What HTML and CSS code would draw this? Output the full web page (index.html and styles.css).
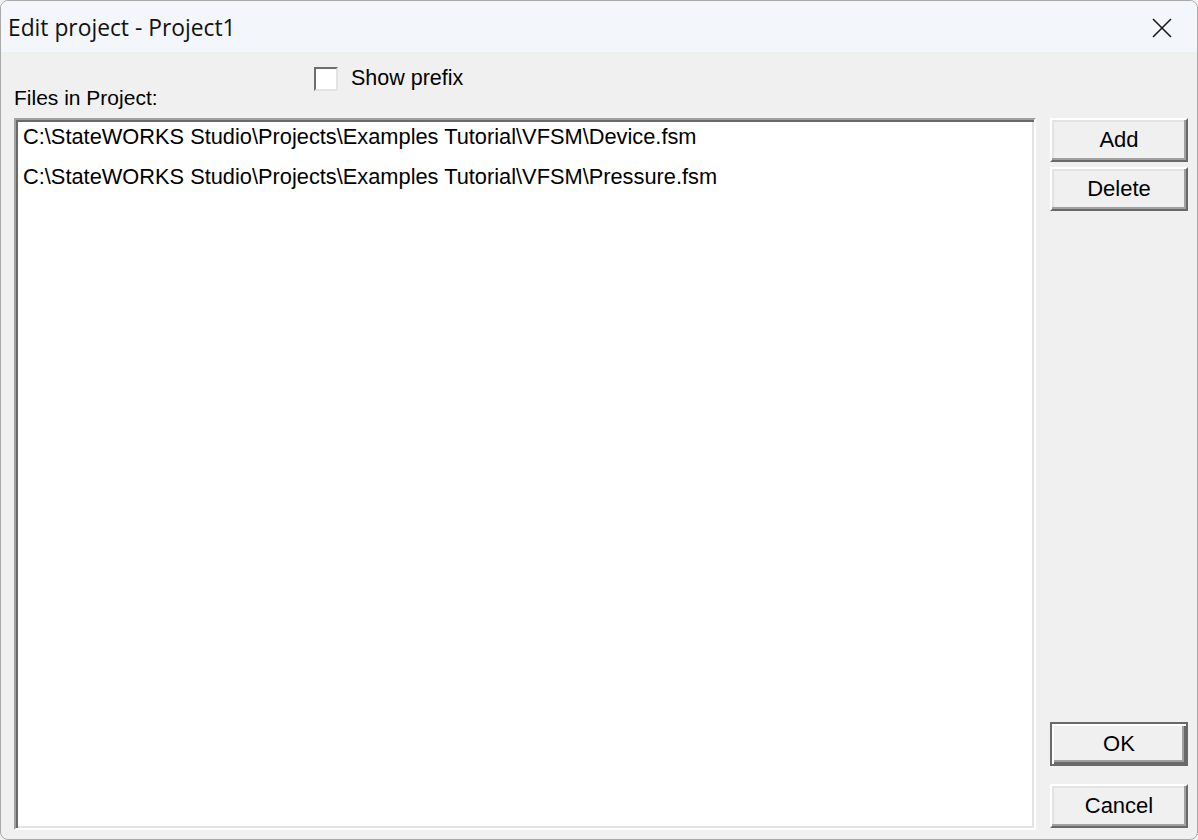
FILE: index.html
```html
<!DOCTYPE html>
<html>

<head>
  <title>Edit project - Project1</title>
  <link rel="stylesheet" href="styles.css">
</head>

<body>
  <div class="window">
    <div class="title-bar">
      <span class="title-text">Edit project - Project1</span>
      <span class="close-btn">
        <svg width="22" height="22" viewBox="0 0 22 22">
          <path d="M2 2 L20 20 M20 2 L2 20" stroke="#1a1a1a" stroke-width="1.6" fill="none" />
        </svg>
      </span>
    </div>
    <div class="dialog-body">
      <div class="top-row">
        <span class="files-label">Files in Project:</span>
        <label class="prefix-check">
          <span class="check-box"></span>
          <span>Show prefix</span>
        </label>
      </div>
      <div class="main-row">
        <div class="list-box">
          <div class="list-item">C:\StateWORKS Studio\Projects\Examples Tutorial\VFSM\Device.fsm</div>
          <div class="list-item">C:\StateWORKS Studio\Projects\Examples Tutorial\VFSM\Pressure.fsm</div>
        </div>
        <div class="side-buttons">
          <div class="btn-group">
            <button class="win-btn">Add</button>
            <button class="win-btn">Delete</button>
          </div>
          <div class="btn-group bottom-group">
            <button class="win-btn default-btn">OK</button>
            <button class="win-btn">Cancel</button>
          </div>
        </div>
      </div>
    </div>
  </div>
</body>

</html>
```

FILE: styles.css
```css
body {
  margin: 0;
  background-color: #f0f0f0;
  font-family: "Liberation Sans", Arial, sans-serif;
}

.window {
  width: 1198px;
  height: 840px;
  box-sizing: border-box;
  border: 1px solid #a9a9a9;
  border-radius: 8px;
  overflow: hidden;
  background-color: #f0f0f0;
  display: flex;
  flex-direction: column;
}

.title-bar {
  height: 51px;
  background-color: #f3f6fb;
  display: flex;
  align-items: center;
  justify-content: space-between;
  padding-left: 7px;
  flex-shrink: 0;
}

.title-text {
  font-family: "Open Sans", "Noto Sans", sans-serif;
  font-size: 22.8px;
  color: #111;
  margin-top: 2px;
}

.close-btn {
  width: 70px;
  display: flex;
  justify-content: center;
  margin-top: 2px;
}

.dialog-body {
  flex: 1;
  display: flex;
  flex-direction: column;
  padding: 0 9px 9px 13px;
}

.top-row {
  height: 66px;
  position: relative;
  flex-shrink: 0;
}

.files-label {
  position: absolute;
  left: 0;
  top: 34px;
  font-size: 21px;
  color: #000;
}

.prefix-check {
  position: absolute;
  left: 300px;
  top: 14px;
  display: flex;
  align-items: center;
  gap: 13px;
  font-size: 21.5px;
  color: #000;
}

.check-box {
  width: 20px;
  height: 20px;
  background: #fff;
  border-top: 2px solid #6e6e6e;
  border-left: 2px solid #6e6e6e;
  border-right: 2px solid #e3e3e3;
  border-bottom: 2px solid #e3e3e3;
}

.main-row {
  flex: 1;
  display: flex;
  gap: 14px;
}

.list-box {
  width: 1022px;
  flex-shrink: 0;
  box-sizing: border-box;
  background: #fff;
  border-top: 2px solid #a0a0a0;
  border-left: 2px solid #a0a0a0;
  border-right: 2px solid #ffffff;
  border-bottom: 2px solid #ffffff;
  box-shadow: inset 2px 2px 0 #696969, inset -2px -2px 0 #e3e3e3;
  padding: 2px 0 0 7px;
}

.list-item {
  height: 40px;
  line-height: 30px;
  font-size: 21.8px;
  color: #000;
}

.side-buttons {
  flex: 1;
  display: flex;
  flex-direction: column;
  justify-content: space-between;
  padding-top: 0;
  padding-bottom: 2px;
}

.btn-group {
  display: flex;
  flex-direction: column;
  gap: 5px;
}

.bottom-group {
  gap: 18px;
}

.win-btn {
  width: 138px;
  height: 44px;
  box-sizing: border-box;
  font-family: "Liberation Sans", Arial, sans-serif;
  font-size: 22px;
  color: #000;
  background: #f0f0f0;
  border-top: 2px solid #ffffff;
  border-left: 2px solid #ffffff;
  border-right: 2px solid #696969;
  border-bottom: 2px solid #696969;
  box-shadow: inset -2px -2px 0 #a0a0a0, inset 2px 2px 0 #e3e3e3;
  padding: 0;
}

.default-btn {
  border: 2px solid #696969;
  box-shadow: inset 2px 2px 0 #ffffff, inset -2px -2px 0 #696969, inset -4px -4px 0 #a0a0a0;
}
```
